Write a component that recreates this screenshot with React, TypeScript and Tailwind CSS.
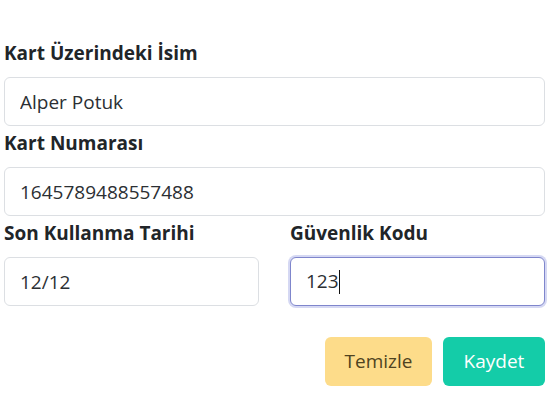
import React, { useState } from "react";

const font = { fontFamily: '"Open Sans", "Noto Sans", sans-serif' };

const labelClass = "h-[27px] mt-[2px] mb-[10px] text-[19px] leading-[27px] font-bold text-[#212529]";

const Field: React.FC<{ label: string; value: string; onChange: (v: string) => void }> = ({
  label,
  value,
  onChange,
}) => (
  <div className="flex flex-col">
    <label className={labelClass}>{label}</label>
    <input
      value={value}
      onChange={(e) => onChange(e.target.value)}
      className="h-[49px] w-full rounded-[6px] border border-[#dcdfe3] bg-white px-[15px] text-[19px] text-[#2b2f33] outline-none"
    />
  </div>
);

const App: React.FC = () => {
  const [name, setName] = useState("Alper Potuk");
  const [number, setNumber] = useState("1645789488557488");
  const [expiry, setExpiry] = useState("12/12");
  const [cvv] = useState("123");

  const handleClear = (): void => {
    setName("");
    setNumber("");
    setExpiry("");
  };

  return (
    <div style={font} className="min-h-screen w-[552px] bg-white pt-[38px] pl-[4px] pr-[7px]">
      <div className="flex flex-col gap-[2px]">
        <Field label="Kart Üzerindeki İsim" value={name} onChange={setName} />
        <Field label="Kart Numarası" value={number} onChange={setNumber} />
        <div className="grid grid-cols-2 gap-[31px]">
          <Field label="Son Kullanma Tarihi" value={expiry} onChange={setExpiry} />
          <div className="flex flex-col">
            <label className={labelClass}>Güvenlik Kodu</label>
            <div className="h-[49px] w-full rounded-[6px] border border-[#7f86cc] bg-white px-[15px] text-[19px] leading-[47px] text-[#2b2f33] shadow-[0_0_0_2px_#d5d8f3]">
              {cvv}
              <span className="inline-block w-px h-[24px] align-middle bg-[#111] -mt-[2px]" />
            </div>
          </div>
        </div>
      </div>
      <div className="mt-[31px] flex justify-end gap-[11px]">
        <button
          onClick={handleClear}
          className="h-[49px] w-[107px] rounded-[6px] bg-[#fddc8a] text-[19px] text-[#4f4320]"
        >
          Temizle
        </button>
        <button className="h-[49px] w-[102px] rounded-[6px] bg-[#14cca8] text-[19px] text-white">Kaydet</button>
      </div>
    </div>
  );
};

export default App;
